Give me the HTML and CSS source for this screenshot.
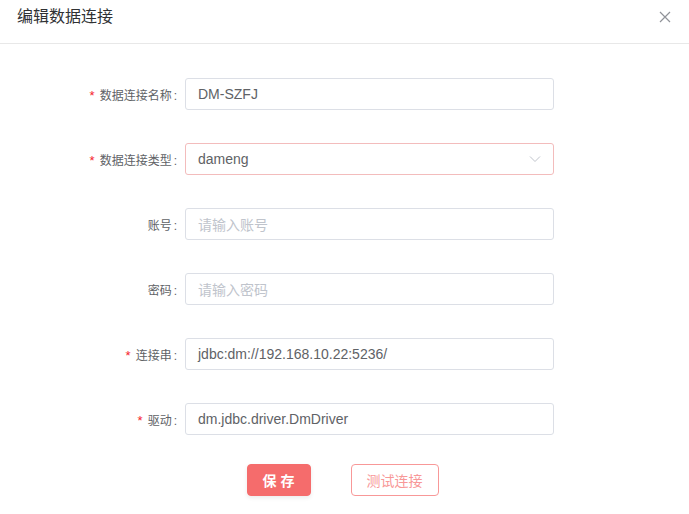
FILE: index.html
```html
<!DOCTYPE html>
<html lang="zh">
<head>
<meta charset="utf-8">
<link rel="stylesheet" href="styles.css">
</head>
<body>
<div class="dialog">
  <div class="header">
    <span class="title">编辑数据连接</span>
    <svg class="close" width="12" height="12" viewBox="0 0 12 12"><path d="M1 1L11 11M11 1L1 11" stroke="#909399" stroke-width="1.2" fill="none"/></svg>
  </div>
  <div class="body">
    <div class="row">
      <label class="label req">数据连接名称<span class="colon">:</span></label>
      <div class="input"><span class="val">DM-SZFJ</span></div>
    </div>
    <div class="row">
      <label class="label req">数据连接类型<span class="colon">:</span></label>
      <div class="input select"><span class="val">dameng</span>
        <svg class="arrow" width="12" height="8" viewBox="0 0 12 8"><path d="M1 1.5L6 6.5L11 1.5" stroke="#c0c4cc" stroke-width="1" fill="none"/></svg>
      </div>
    </div>
    <div class="row">
      <label class="label">账号<span class="colon">:</span></label>
      <div class="input"><span class="ph">请输入账号</span></div>
    </div>
    <div class="row">
      <label class="label">密码<span class="colon">:</span></label>
      <div class="input"><span class="ph">请输入密码</span></div>
    </div>
    <div class="row">
      <label class="label req">连接串<span class="colon">:</span></label>
      <div class="input"><span class="val">jdbc:dm://192.168.10.22:5236/</span></div>
    </div>
    <div class="row">
      <label class="label req">驱动<span class="colon">:</span></label>
      <div class="input"><span class="val">dm.jdbc.driver.DmDriver</span></div>
    </div>
    <div class="actions">
      <button class="btn primary">保 存</button>
      <button class="btn plain">测试连接</button>
    </div>
  </div>
</div>
</body>
</html>
```
FILE: styles.css
```css
* { box-sizing: border-box; }
html, body { margin: 0; padding: 0; background: #fff; }
body { font-family: "Liberation Sans", "Noto Sans CJK SC", sans-serif; width: 689px; height: 514px; overflow: hidden; }
.dialog { width: 689px; }
.header {
  height: 44px;
  border-bottom: 1px solid #e8e8e8;
  display: flex;
  align-items: center;
  justify-content: space-between;
  padding: 0 18px 10px 17px;
}
.title { font-size: 16px; color: #303133; line-height: 20px; }
.close { display: block; }
.body { padding-top: 34px; }
.row { display: flex; align-items: center; height: 32px; margin-bottom: 33px; }
.label {
  width: 185px;
  padding-right: 8px;
  text-align: right;
  font-size: 12px;
  color: #606266;
}
.colon { margin-left: 2px; }
.label.req::before { content: "*"; color: #f5222d; margin-right: 5px; font-size: 13px; }
.input {
  width: 369px;
  height: 32px;
  border: 1px solid #dcdfe6;
  border-radius: 3px;
  display: flex;
  align-items: center;
  padding: 0 12px;
  font-size: 14px;
}
.input.select { border-color: #f3bcbc; justify-content: space-between; padding-right: 12px; }
.val { color: #606266; }
.ph { color: #c0c4cc; }
.arrow { display: block; }
.actions { display: flex; justify-content: center; gap: 40px; margin-top: -4px; padding-right: 4px; }
.btn {
  height: 32px;
  border-radius: 4px;
  font-family: inherit;
  font-size: 14px;
  padding: 0;
  cursor: pointer;
}
.btn.primary {
  width: 64px;
  background: #f56c6c;
  border: 1px solid #f56c6c;
  color: #fff;
  font-weight: bold;
  box-shadow: 0 2px 4px rgba(0,0,0,0.08);
}
.btn.plain {
  width: 88px;
  background: #fff;
  border: 1px solid #f89898;
  color: #f89898;
}
```
